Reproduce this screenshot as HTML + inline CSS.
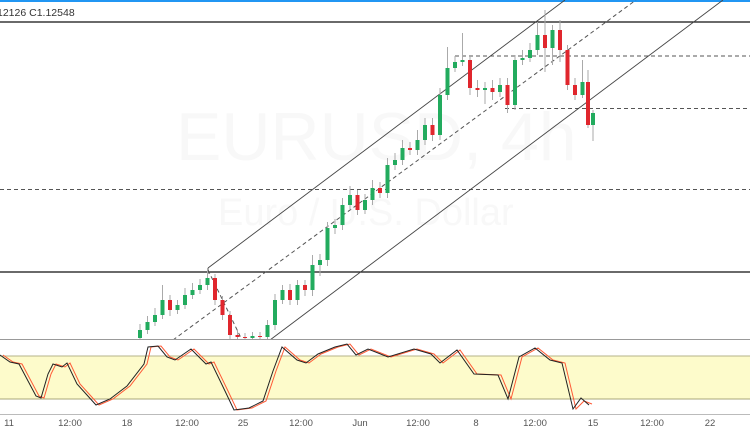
<!DOCTYPE html>
<html><head><meta charset="utf-8"><style>
html,body{margin:0;padding:0;background:#fff;width:750px;height:430px;overflow:hidden}
svg{display:block}
text{font-family:"Liberation Sans",sans-serif}
</style></head><body>
<svg width="750" height="430" viewBox="0 0 750 430" xmlns="http://www.w3.org/2000/svg">
<rect x="0" y="0" width="750" height="2" fill="#2196f3"/>
<text x="-3" y="16" font-size="10.5" fill="#333">12126  C1.12548</text>
<text x="176" y="160" font-size="68" fill="#f8f8f8">EURUSD, 4h</text>
<text x="218" y="225" font-size="38" fill="#f8f8f8">Euro / U.S. Dollar</text>
<line x1="0" y1="22" x2="750" y2="22" stroke="#111" stroke-width="1.3"/>
<line x1="0" y1="272" x2="750" y2="272" stroke="#111" stroke-width="1.3"/>
<g stroke="#555" stroke-width="1" stroke-dasharray="4,3">
<line x1="455" y1="56" x2="750" y2="56"/>
<line x1="505" y1="108.5" x2="750" y2="108.5"/>
<line x1="0" y1="189.5" x2="750" y2="189.5"/>
<line x1="173" y1="340" x2="636" y2="0"/>
<line x1="208" y1="270" x2="242" y2="340"/>
</g>
<g stroke="#444" stroke-width="0.9">
<line x1="208" y1="268" x2="565" y2="0"/>
<line x1="270" y1="340" x2="723" y2="0"/>
<line x1="208" y1="268" x2="208" y2="274"/>
</g>
<g stroke="#aaa" stroke-width="1">
<line x1="140" y1="324" x2="140" y2="342"/><line x1="147.5" y1="316" x2="147.5" y2="334"/><line x1="155" y1="308" x2="155" y2="326"/><line x1="162.5" y1="285" x2="162.5" y2="319"/><line x1="170" y1="295" x2="170" y2="316"/><line x1="177.5" y1="300" x2="177.5" y2="314"/><line x1="185" y1="288" x2="185" y2="309"/><line x1="192.5" y1="283" x2="192.5" y2="299"/><line x1="200" y1="279" x2="200" y2="294"/><line x1="207.5" y1="270" x2="207.5" y2="290"/><line x1="215" y1="274" x2="215" y2="305"/><line x1="222.5" y1="296" x2="222.5" y2="320"/><line x1="230" y1="311" x2="230" y2="340"/><line x1="237.5" y1="330" x2="237.5" y2="340"/><line x1="245" y1="333" x2="245" y2="340"/><line x1="252.5" y1="332" x2="252.5" y2="340"/><line x1="260" y1="332" x2="260" y2="340"/><line x1="267.5" y1="320" x2="267.5" y2="340"/><line x1="275" y1="294" x2="275" y2="330"/><line x1="282.5" y1="285" x2="282.5" y2="304"/><line x1="290" y1="284" x2="290" y2="305"/><line x1="297.5" y1="280" x2="297.5" y2="305"/><line x1="305" y1="280" x2="305" y2="296"/><line x1="312.5" y1="255" x2="312.5" y2="296"/><line x1="320" y1="254" x2="320" y2="276"/><line x1="327.5" y1="222" x2="327.5" y2="266"/><line x1="335" y1="219" x2="335" y2="234"/><line x1="342.5" y1="198" x2="342.5" y2="230"/><line x1="350" y1="186" x2="350" y2="210"/><line x1="357.5" y1="190" x2="357.5" y2="215"/><line x1="365" y1="194" x2="365" y2="214"/><line x1="372.5" y1="180" x2="372.5" y2="205"/><line x1="380" y1="182" x2="380" y2="198"/><line x1="387.5" y1="158" x2="387.5" y2="198"/><line x1="395" y1="153" x2="395" y2="170"/><line x1="402.5" y1="140" x2="402.5" y2="165"/><line x1="410" y1="142" x2="410" y2="155"/><line x1="417.5" y1="130" x2="417.5" y2="155"/><line x1="425" y1="118" x2="425" y2="145"/><line x1="432.5" y1="118" x2="432.5" y2="141"/><line x1="440" y1="88" x2="440" y2="140"/><line x1="447.5" y1="47" x2="447.5" y2="100"/><line x1="455" y1="56" x2="455" y2="72"/><line x1="462.5" y1="33" x2="462.5" y2="66"/><line x1="470" y1="55" x2="470" y2="95"/><line x1="477.5" y1="80" x2="477.5" y2="97"/><line x1="485" y1="82" x2="485" y2="104"/><line x1="492.5" y1="80" x2="492.5" y2="100"/><line x1="500" y1="78" x2="500" y2="97"/><line x1="507.5" y1="78" x2="507.5" y2="113"/><line x1="515" y1="55" x2="515" y2="110"/><line x1="522.5" y1="50" x2="522.5" y2="65"/><line x1="530" y1="43" x2="530" y2="62"/><line x1="537.5" y1="22" x2="537.5" y2="55"/><line x1="545" y1="10" x2="545" y2="72"/><line x1="552.5" y1="25" x2="552.5" y2="65"/><line x1="560" y1="20" x2="560" y2="62"/><line x1="567.5" y1="45" x2="567.5" y2="90"/><line x1="575" y1="78" x2="575" y2="100"/><line x1="582.5" y1="60" x2="582.5" y2="98"/><line x1="588" y1="70" x2="588" y2="128"/><line x1="593" y1="110" x2="593" y2="141"/>
</g>
<g fill="#22ab5e">
<rect x="138" y="330" width="4" height="8"/><rect x="145.5" y="322" width="4" height="8"/><rect x="153" y="315" width="4" height="7"/><rect x="160.5" y="300" width="4" height="15"/><rect x="175.5" y="305" width="4" height="5"/><rect x="183" y="295" width="4" height="10"/><rect x="190.5" y="290" width="4" height="5"/><rect x="198" y="285" width="4" height="5"/><rect x="205.5" y="278" width="4" height="7"/><rect x="250.5" y="336" width="4" height="2"/><rect x="265.5" y="325" width="4" height="12"/><rect x="273" y="300" width="4" height="25"/><rect x="280.5" y="290" width="4" height="10"/><rect x="295.5" y="285" width="4" height="15"/><rect x="310.5" y="265" width="4" height="25"/><rect x="318" y="260" width="4" height="5"/><rect x="325.5" y="228" width="4" height="32"/><rect x="333" y="225" width="4" height="3"/><rect x="340.5" y="205" width="4" height="20"/><rect x="348" y="195" width="4" height="10"/><rect x="363" y="200" width="4" height="10"/><rect x="370.5" y="188" width="4" height="12"/><rect x="385.5" y="165" width="4" height="28"/><rect x="393" y="160" width="4" height="5"/><rect x="400.5" y="148" width="4" height="12"/><rect x="415.5" y="140" width="4" height="10"/><rect x="423" y="125" width="4" height="15"/><rect x="438" y="95" width="4" height="40"/><rect x="445.5" y="68" width="4" height="27"/><rect x="453" y="62" width="4" height="6"/><rect x="460.5" y="60" width="4" height="2"/><rect x="483" y="88" width="4" height="2"/><rect x="498" y="85" width="4" height="7"/><rect x="513" y="60" width="4" height="45"/><rect x="520.5" y="58" width="4" height="2"/><rect x="528" y="50" width="4" height="8"/><rect x="535.5" y="35" width="4" height="15"/><rect x="550.5" y="30" width="4" height="18"/><rect x="580.5" y="82" width="4" height="13"/><rect x="591" y="113" width="4" height="12"/>
</g>
<g fill="#e0262d">
<rect x="168" y="300" width="4" height="10"/><rect x="213" y="278" width="4" height="22"/><rect x="220.5" y="300" width="4" height="15"/><rect x="228" y="315" width="4" height="20"/><rect x="235.5" y="335" width="4" height="2"/><rect x="243" y="337" width="4" height="1"/><rect x="258" y="336" width="4" height="1"/><rect x="288" y="290" width="4" height="10"/><rect x="303" y="285" width="4" height="5"/><rect x="355.5" y="195" width="4" height="15"/><rect x="378" y="188" width="4" height="5"/><rect x="408" y="148" width="4" height="2"/><rect x="430.5" y="125" width="4" height="10"/><rect x="468" y="60" width="4" height="28"/><rect x="475.5" y="88" width="4" height="2"/><rect x="490.5" y="88" width="4" height="4"/><rect x="505.5" y="85" width="4" height="20"/><rect x="543" y="35" width="4" height="13"/><rect x="558" y="30" width="4" height="20"/><rect x="565.5" y="50" width="4" height="35"/><rect x="573" y="85" width="4" height="10"/><rect x="586" y="82" width="4" height="43"/>
</g>
<rect x="0" y="340" width="750" height="90" fill="#fff"/>
<line x1="0" y1="339.5" x2="750" y2="339.5" stroke="#999" stroke-width="1"/>
<rect x="0" y="356" width="750" height="43" fill="#fdfbcb"/>
<line x1="0" y1="356" x2="750" y2="356" stroke="#b5b38a" stroke-width="1"/>
<line x1="0" y1="399" x2="750" y2="399" stroke="#a9a77a" stroke-width="1"/>
<line x1="0" y1="414.5" x2="750" y2="414.5" stroke="#bbb" stroke-width="1"/>
<polyline fill="none" stroke="#ff5a36" stroke-width="1" points="3,355 13,362 22,364 39,396 44,398 51,374 56,364 65,367 70,363 80,384 99,405 113,399 130,386 147,364 151,347 161,346 170,357 178,360 194,349 209,364 214,362 228,391 237,410 252,408 266,401 276,371 285,347 300,360 309,363 321,354 338,347 350,344 359,355 371,349 391,357 417,349 434,354 443,363 460,350 477,374 501,375 511,399 522,357 538,348 553,360 565,363 576,409 584,401 592,404"/>
<polyline fill="none" stroke="#222" stroke-width="1" points="0,355 10,362 19,364 36,396 41,398 48,374 53,364 62,367 67,363 77,384 96,405 110,399 127,386 144,364 148,347 158,346 167,357 175,360 191,349 206,364 211,362 225,391 234,410 249,408 263,401 273,371 282,347 297,360 306,363 318,354 335,347 347,344 356,355 368,349 388,357 414,349 431,354 440,363 457,350 474,374 498,375 508,399 519,357 535,348 550,360 562,363 573,409 581,398 589,405"/>
<g font-size="9.5" fill="#555" text-anchor="middle">
<text x="9" y="426">11</text><text x="70" y="426">12:00</text><text x="127" y="426">18</text><text x="187" y="426">12:00</text><text x="243" y="426">25</text><text x="301" y="426">12:00</text><text x="360" y="426">Jun</text><text x="418" y="426">12:00</text><text x="476" y="426">8</text><text x="535" y="426">12:00</text><text x="593" y="426">15</text><text x="652" y="426">12:00</text><text x="710" y="426">22</text>
</g>
</svg>
</body></html>
